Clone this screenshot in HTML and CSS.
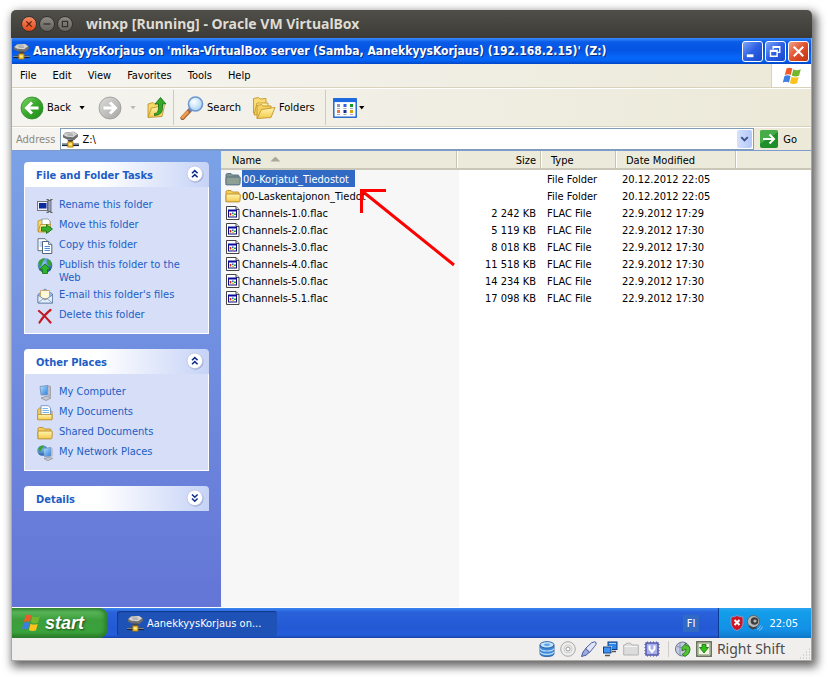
FILE: index.html
```html
<!DOCTYPE html>
<html lang="en">
<head>
<meta charset="utf-8">
<title>winxp [Running] - Oracle VM VirtualBox</title>
<link rel="stylesheet" href="styles.css">
</head>
<body>
<svg class="defs" aria-hidden="true">
  <defs>
    <linearGradient id="gGreen" x1="0" y1="0" x2="1" y2="1"><stop offset="0" stop-color="#7fd86a"/><stop offset=".5" stop-color="#3aa62c"/><stop offset="1" stop-color="#1f8a1c"/></linearGradient>
    <linearGradient id="gGrey" x1="0" y1="0" x2="1" y2="1"><stop offset="0" stop-color="#dcdcda"/><stop offset="1" stop-color="#a5a5a3"/></linearGradient>
    <linearGradient id="gFolder" x1="0" y1="0" x2="0" y2="1"><stop offset="0" stop-color="#fff6b0"/><stop offset="1" stop-color="#f3c94c"/></linearGradient>
    <linearGradient id="gScreen" x1="0" y1="0" x2="1" y2="1"><stop offset="0" stop-color="#b9e6ff"/><stop offset="1" stop-color="#2e7fdc"/></linearGradient>
    <radialGradient id="gLens" cx=".4" cy=".35" r=".7"><stop offset="0" stop-color="#fff"/><stop offset="1" stop-color="#9fd0f4"/></radialGradient>
    <radialGradient id="gGlobe" cx=".35" cy=".3" r=".8"><stop offset="0" stop-color="#8fc8f4"/><stop offset="1" stop-color="#1a4f9e"/></radialGradient>
  </defs>
  <symbol id="netdrive" viewBox="0 0 16 16">
    <path d="M.8 4 3.500 1.200 11.500.7 15 3.200v2.300L11.500 8.500 5 8 1 6z" fill="#6e6e6e"/>
    <path d="M1.300 3.800 4 1.500 11.300 1 14.300 3 10.500 5.800 4.200 5.400z" fill="#d4d4d4"/>
    <path d="M4.500 2.800h5.500M5.500 4h5" stroke="#999" stroke-width=".8"/>
    <path d="M5 8.200h6L9.300 10.500H6.500z" fill="#444"/>
    <path d="M0 13h16" stroke="#1c2430" stroke-width="2.400"/><path d="M0 12.500h16" stroke="#9fb4c8" stroke-width=".8"/>
    <rect x="5.500" y="10.300" width="4.800" height="4.800" fill="#ffcf3a" stroke="#a87308" stroke-width=".8"/><path d="M6.700 11.700h2.300v1.500h-2.300z" fill="#fff2a8"/>
  </symbol>
  <symbol id="folder" viewBox="0 0 16 16">
    <path d="M1 12.500V4Q1 2.500 2.500 2.500H6L7.500 4H13Q14 4 14 5.500v2" fill="#f4cf5a" stroke="#b8892a" stroke-width=".9"/>
    <path d="M1 13.500V7Q1.300 6 2.500 6H14.200Q15.400 6 15.300 7L15 12.600Q14.900 13.900 14 13.900H1.800Q1 13.900 1 13z" fill="url(#gFolder)" stroke="#b8892a" stroke-width=".9"/>
  </symbol>
  <symbol id="folder-sel" viewBox="0 0 16 16">
    <path d="M1 12.500V4Q1 2.500 2.500 2.500H6L7.500 4H13Q14 4 14 5.500v2" fill="#7f9690" stroke="#506880" stroke-width=".9"/>
    <path d="M1 13.500V7Q1.300 6 2.500 6H14.200Q15.400 6 15.300 7L15 12.600Q14.900 13.900 14 13.900H1.800Q1 13.900 1 13z" fill="#8ea096" stroke="#506880" stroke-width=".9"/>
  </symbol>
  <symbol id="flac" viewBox="0 0 16 16">
    <path d="M1.500 1.500h9.500l3 3v10H1.500z" fill="#fff" stroke="#444"/><path d="M11 1.500v3h3" fill="#ddd" stroke="#444"/>
    <rect x="3.500" y="5.500" width="8" height="6.500" fill="#fff" stroke="#0a0a7a"/><path d="M3 5.500h9" stroke="#0a0a9a" stroke-width="2"/>
    <path d="M4.500 9h2M5.500 8v2.500" stroke="#d22" stroke-width="1.200"/><rect x="7" y="7.500" width="1.600" height="1.500" fill="#26c"/><rect x="9" y="8.500" width="2" height="1.500" fill="#2a2"/><rect x="7.300" y="9.700" width="1.500" height="1.300" fill="#d8a400"/>
  </symbol>
  <symbol id="flag" viewBox="0 0 20 18">
    <path d="M4.500 1.600Q7.500 0 10.300 1.600L8.800 8Q6 6.700 2.800 8z" fill="#f0592a"/>
    <path d="M11.300 2.300Q14.500 4 18.800 2.300L17 8.700Q13.300 10.200 9.800 8.500z" fill="#73b82c"/>
    <path d="M2.500 9Q5.500 7.700 8.500 9L7 15.400Q4 14 .8 15.400z" fill="#3c7fe0"/>
    <path d="M9.500 9.700Q13 11.300 16.700 9.900L15 16.200Q11 17.700 7.900 16z" fill="#fbc21c"/>
  </symbol>
  <symbol id="chev-up" viewBox="0 0 18 18">
    <circle cx="9.500" cy="9.700" r="8" fill="#8c98c4" opacity=".7"/><circle cx="8.800" cy="8.800" r="7.800" fill="#fff" stroke="#b9c3e0" stroke-width=".8"/>
    <path d="M6 8.300 8.800 5.600l2.800 2.700M6 12.300l2.800-2.700 2.800 2.700" fill="none" stroke="#0c2b86" stroke-width="1.500"/>
  </symbol>
  <symbol id="chev-down" viewBox="0 0 18 18">
    <circle cx="9.500" cy="9.700" r="8" fill="#8c98c4" opacity=".7"/><circle cx="8.800" cy="8.800" r="7.800" fill="#fff" stroke="#b9c3e0" stroke-width=".8"/>
    <path d="M6 5.500l2.800 2.700 2.800-2.700M6 9.500l2.800 2.700 2.800-2.700" fill="none" stroke="#0c2b86" stroke-width="1.500"/>
  </symbol>
</svg>

<main class="window">
  <header class="host-title">
    <button class="orb orb-close" aria-label="Close machine"><svg viewBox="0 0 16 16"><path d="M5 5l6 6M11 5l-6 6" stroke="#5c1c0a" stroke-width="1.500"/></svg></button>
    <button class="orb" aria-label="Minimize machine"><svg viewBox="0 0 16 16"><path d="M4 8h8" stroke="#33322e" stroke-width="1.500"/></svg></button>
    <button class="orb" aria-label="Maximize machine"><svg viewBox="0 0 16 16"><path d="M5 5h6v6H5z" fill="none" stroke="#33322e" stroke-width="1.400"/></svg></button>
    <h1>winxp [Running] - Oracle VM VirtualBox</h1>
  </header>

  <section class="guest">
    <header class="xp-title">
      <svg class="i18"><use href="#netdrive"/></svg>
      <h2>AanekkyysKorjaus on 'mika-VirtualBox server (Samba, AanekkyysKorjaus) (192.168.2.15)' (Z:)</h2>
      <div class="caption">
        <button aria-label="Minimize"><svg viewBox="0 0 20 20"><path d="M4 14.500h7" stroke="#fff" stroke-width="3"/></svg></button>
        <button aria-label="Restore"><svg viewBox="0 0 20 20"><path d="M7.500 8V5h7v6H12M7.500 5.500h7" fill="none" stroke="#fff" stroke-width="1.400"/><path d="M4.700 9h7v6h-7zM4.700 9.700h7" fill="none" stroke="#fff" stroke-width="1.500"/></svg></button>
        <button class="close" aria-label="Close"><svg viewBox="0 0 20 20"><path d="M5 5l10 10M15 5L5 15" stroke="#fff" stroke-width="2.200"/></svg></button>
      </div>
    </header>

    <nav class="menubar">
      <button>File</button><button>Edit</button><button>View</button><button>Favorites</button><button>Tools</button><button>Help</button>
      <span class="throbber"><svg viewBox="0 0 20 18"><use href="#flag"/></svg></span>
    </nav>

    <div class="toolbar">
      <button class="tool back"><svg class="i24" viewBox="0 0 24 24"><circle cx="12" cy="12" r="11" fill="url(#gGreen)" stroke="#2b8a24" stroke-width=".8"/><path d="M18.500 12H7M12 6.500 6.500 12l5.500 5.500" fill="none" stroke="#fff" stroke-width="3"/></svg>Back</button>
      <button class="drop" aria-label="Back history"></button>
      <button class="tool forward" aria-label="Forward"><svg class="i24" viewBox="0 0 24 24"><circle cx="12" cy="12" r="11" fill="url(#gGrey)" stroke="#999" stroke-width=".8"/><path d="M5.500 12H17M12 6.500l5.500 5.500-5.500 5.500" fill="none" stroke="#fff" stroke-width="3"/></svg></button>
      <button class="drop off" aria-label="Forward history"></button>
      <button class="tool up" aria-label="Up"><svg class="i24" viewBox="0 0 24 24"><path d="M3 21V8l5-1.500L9.500 8 14 7v5z" fill="#f6d868" stroke="#b98d22" stroke-width=".8"/><path d="M3 21.500 6.500 12l13-2.500L17 20.500z" fill="url(#gFolder)" stroke="#b98d22" stroke-width=".8"/><path d="M9.500 17.500q4 0 4-5.500V8H10l5.500-6.500L21 8h-3.500v4q0 7-8 7.500z" fill="#35a82a" stroke="#14700f" stroke-width=".8"/></svg></button>
      <span class="rule"></span>
      <button class="tool search"><svg class="i24" viewBox="0 0 24 24"><path d="M2.500 22 10.500 13.500" stroke="#9a5b2a" stroke-width="4.200" stroke-linecap="round"/><path d="M2.500 21.500 7.500 16.200" stroke="#f19a4a" stroke-width="2.800" stroke-linecap="round"/><path d="M9 14.800l2-2" stroke="#777fae" stroke-width="3.500"/><circle cx="15.500" cy="8" r="7" fill="url(#gLens)" stroke="#6f96cf" stroke-width="1.600"/></svg>Search</button>
      <button class="tool folders"><svg class="i24" viewBox="0 0 24 24"><path d="M1.500 17V2.500l5-1L8 3l6-.5V15z" fill="#f9dc74" stroke="#c39528" stroke-width=".9"/><path d="M2 19 5 7h11v11z" fill="url(#gFolder)" stroke="#c39528" stroke-width=".9"/><path d="M5 22.500V9.500l4.500-1L11 10h8v5z" fill="#f6d060" stroke="#c39528" stroke-width=".9"/><path d="M5 22.500 9.500 13.500l13.500-2-4 10z" fill="url(#gFolder)" stroke="#c39528" stroke-width=".9"/></svg>Folders</button>
      <span class="rule"></span>
      <button class="tool views" aria-label="Views"><svg class="i24" viewBox="0 0 24 20"><rect x=".8" y=".8" width="22.400" height="18.400" fill="#fff" stroke="#1560cc" stroke-width="1.400"/><path d="M.5 2.300h23" stroke="#1d6ae0" stroke-width="3.600"/><path d="M4 6h3v3H4z" fill="#8f93b8"/><path d="M10.500 6h3v3h-3z" fill="#2c66d8"/><path d="M17 6h3v3h-3z" fill="#149a28"/><path d="M4 12h3v3H4z" fill="#ef6f4c"/><path d="M10.500 12h3v3h-3z" fill="#17308c"/><path d="M17 12h3v3h-3z" fill="#d1a50a"/><path d="M4 10.500h3M10.500 10.500h3M17 10.500h3M4 16.500h3M10.500 16.500h3M17 16.500h3" stroke="#aab"/></svg></button>
      <button class="drop" aria-label="View options"></button>
    </div>

    <form class="address">
      <label for="addr">Address</label>
      <div class="combo">
        <svg class="i18"><use href="#netdrive"/></svg>
        <input id="addr" type="text" value="Z:\">
        <button type="button" aria-label="Show addresses"><svg viewBox="0 0 16 18"><path d="M4.500 7 8 10.500 11.500 7" fill="none" stroke="#3c5488" stroke-width="2.200"/></svg></button>
      </div>
      <button type="button" class="go"><svg viewBox="0 0 18 18"><rect width="18" height="18" rx="2" fill="#1f8f2b"/><path d="M0 2a2 2 0 0 1 2-2h14a2 2 0 0 1 2 2L0 14z" fill="#5fbf5c" opacity=".6"/><path d="M3 9h11M9.500 4.500 14 9l-4.500 4.500" fill="none" stroke="#fff" stroke-width="2"/></svg>Go</button>
    </form>

    <div class="explorer">
      <aside class="tasks">
        <section class="panel">
          <h3>File and Folder Tasks <button aria-label="Collapse"><svg><use href="#chev-up"/></svg></button></h3>
          <ul>
            <li><svg viewBox="0 0 16 16"><rect x=".5" y="3.500" width="10" height="9" fill="#eef" stroke="#777"/><rect x="2" y="5" width="7.500" height="5.500" fill="#0b2a9c"/><path d="M9.500 1.500q3 0 3 1 0-1 3-1M9.500 14.500q3 0 3-1 0 1 3 1" fill="none" stroke="#555"/><rect x="11" y="2.500" width="3" height="11" fill="#9aa8cc" stroke="#555" stroke-width=".8"/></svg><a href="#">Rename this folder</a></li>
            <li><svg viewBox="0 0 16 16"><path d="M1 13V3l4-1.500L6 3h7v9z" fill="#f7da74" stroke="#b48a26" stroke-width=".8"/><path d="M5 1h6l2 2v7H5z" fill="#fff" stroke="#789" stroke-width=".7"/><path d="M1 14 3.500 6.500h10L12 14z" fill="url(#gFolder)" stroke="#b48a26" stroke-width=".8"/><path d="M4.500 9h5V6.500L15.500 11l-6 4.500V13h-5z" fill="#3aae2e" stroke="#136b10" stroke-width=".8"/></svg><a href="#">Move this folder</a></li>
            <li><svg viewBox="0 0 16 16"><path d="M1 .7h7l2 2v10H1z" fill="#fff" stroke="#567" stroke-width=".9"/><path d="M2.500 4h5M2.500 6h5M2.500 8h5" stroke="#7fb0e8"/><path d="M5.500 3.500h6l3.300 3V15.500H5.500z" fill="#fff" stroke="#456" stroke-width=".9"/><path d="M11.500 3.500v3h3" fill="#cde" stroke="#456" stroke-width=".7"/><path d="M7.500 8.500h5.500M7.500 10.500h5.500M7.500 12.500h5.500" stroke="#4a90e0"/></svg><a href="#">Copy this folder</a></li>
            <li><svg viewBox="0 0 16 16"><circle cx="8" cy="7.500" r="7.300" fill="url(#gGlobe)"/><path d="M1.500 4Q4.500-.3 8 .5L6 4 4.500 7 2 10zM10 .8q4.500 1.500 5 6.700L12 8l-2-3z" fill="#35a336"/><path d="M8 6l5.500 5.500h-3V15.500h-5v-4h-3z" fill="#2fb32a" stroke="#14700f" stroke-width=".8"/></svg><a href="#">Publish this folder to the Web</a></li>
            <li><svg viewBox="0 0 16 16"><path d="M1 6.500 8 1l7.500 5V15H1z" fill="#9db8dc" stroke="#5e7da8" stroke-width=".8"/><path d="M3.500 2.500h9v8h-9z" fill="#fff8d8" stroke="#c49a4a" stroke-width=".7"/><path d="M1 7l7 5 7.500-5v8H1z" fill="#e6f0fb" stroke="#5e7da8" stroke-width=".8"/><path d="M1 15l5.500-4.500M15.500 15 10 10.500" stroke="#5e7da8" stroke-width=".7"/></svg><a href="#">E-mail this folder's files</a></li>
            <li><svg viewBox="0 0 16 16"><path d="M2 3q5 4 11.500 11.500M13.500 2Q8 6 2.500 14.500" fill="none" stroke="#c41a24" stroke-width="2.200" stroke-linecap="round"/></svg><a href="#">Delete this folder</a></li>
          </ul>
        </section>
        <section class="panel">
          <h3>Other Places <button aria-label="Collapse"><svg><use href="#chev-up"/></svg></button></h3>
          <ul>
            <li><svg viewBox="0 0 16 16"><path d="M3 1.500 10.500.5v9.300L4 10z" fill="url(#gScreen)" stroke="#6f8cb8" stroke-width=".8"/><path d="M10.500.5l3 1v10l-3-2z" fill="#b8bccb" stroke="#888" stroke-width=".6"/><path d="M4 13l6-2 4 2-5 2.500z" fill="#c4c8d4" stroke="#888" stroke-width=".7"/></svg><a href="#">My Computer</a></li>
            <li><svg viewBox="0 0 16 16"><path d="M.7 14V4.500L2.500 3H6v3h9v8z" fill="#f3cc58" stroke="#b8892a" stroke-width=".8"/><path d="M4 .7h7.500L13.500 3v9H4z" fill="#fff" stroke="#5b86c4" stroke-width=".8"/><path d="M5.500 3.500h5.500M5.500 5.500h6.500M5.500 7.500h6.500" stroke="#79b2ec"/><path d="M.7 14.800V9.500H15v5.300z" fill="url(#gFolder)" stroke="#b8892a" stroke-width=".8"/></svg><a href="#">My Documents</a></li>
            <li><svg><use href="#folder"/></svg><a href="#">Shared Documents</a></li>
            <li><svg viewBox="0 0 16 16"><circle cx="5.500" cy="5.500" r="5.200" fill="url(#gGlobe)"/><path d="M1 4Q2.500 0 7 .8L5 4 3 7z" fill="#35a336"/><path d="M6 3.500 14 2.500V11L7.500 11.500z" fill="url(#gScreen)" stroke="#7c95bb" stroke-width=".8"/><path d="M14 2.500l1.800 1V12L14 11z" fill="#b8bccb"/><path d="M7 13.500l6-1.500 2.500 1.500-5 2.200z" fill="#c4c8d4" stroke="#888" stroke-width=".7"/></svg><a href="#">My Network Places</a></li>
          </ul>
        </section>
        <section class="panel">
          <h3>Details <button aria-label="Expand"><svg><use href="#chev-down"/></svg></button></h3>
        </section>
      </aside>

      <div class="list">
        <table>
          <colgroup><col class="c-name"><col class="c-size"><col class="c-type"><col class="c-date"><col></colgroup>
          <thead><tr><th>Name <span class="sort"></span></th><th class="num">Size</th><th>Type</th><th>Date Modified</th><th class="rest"></th></tr></thead>
          <tbody>
            <tr class="selected"><td><svg><use href="#folder-sel"/></svg><span>00-Korjatut_Tiedostot</span></td><td></td><td>File Folder</td><td>20.12.2012 22:05</td><td></td></tr>
            <tr><td><svg><use href="#folder"/></svg><span>00-Laskentajonon_Tiedot</span></td><td></td><td>File Folder</td><td>20.12.2012 22:05</td><td></td></tr>
            <tr><td><svg><use href="#flac"/></svg><span>Channels-1.0.flac</span></td><td>2 242 KB</td><td>FLAC File</td><td>22.9.2012 17:29</td><td></td></tr>
            <tr><td><svg><use href="#flac"/></svg><span>Channels-2.0.flac</span></td><td>5 119 KB</td><td>FLAC File</td><td>22.9.2012 17:30</td><td></td></tr>
            <tr><td><svg><use href="#flac"/></svg><span>Channels-3.0.flac</span></td><td>8 018 KB</td><td>FLAC File</td><td>22.9.2012 17:30</td><td></td></tr>
            <tr><td><svg><use href="#flac"/></svg><span>Channels-4.0.flac</span></td><td>11 518 KB</td><td>FLAC File</td><td>22.9.2012 17:30</td><td></td></tr>
            <tr><td><svg><use href="#flac"/></svg><span>Channels-5.0.flac</span></td><td>14 234 KB</td><td>FLAC File</td><td>22.9.2012 17:30</td><td></td></tr>
            <tr><td><svg><use href="#flac"/></svg><span>Channels-5.1.flac</span></td><td>17 098 KB</td><td>FLAC File</td><td>22.9.2012 17:30</td><td></td></tr>
          </tbody>
        </table>
        <svg class="pointer" viewBox="0 0 98 80" aria-hidden="true"><path d="M27 2.500H2.500V25M2.500 2.500 95 77" fill="none" stroke="#f00" stroke-width="3"/></svg>
      </div>
    </div>

    <footer class="taskbar">
      <button class="start"><svg viewBox="0 0 20 18"><use href="#flag"/></svg>start</button>
      <button class="task"><svg class="i18"><use href="#netdrive"/></svg>AanekkyysKorjaus on...</button>
      <span class="lang">FI</span>
      <div class="tray">
        <svg viewBox="0 0 16 16"><path d="M2 2q4 0 6-1.500Q10 2 14 2v6q0 5-6 7.700Q2 13 2 8z" fill="#cf1524" stroke="#8aa0c8" stroke-width=".9"/><path d="M5.500 5l5 5M10.500 5l-5 5" stroke="#fff" stroke-width="2"/></svg>
        <svg viewBox="0 0 16 16"><ellipse cx="6.500" cy="6.500" rx="6" ry="6" fill="#b9b9b9" stroke="#555" stroke-width=".8"/><circle cx="7.500" cy="6" r="3.800" fill="#3c3c3c"/><circle cx="8" cy="6" r="1.600" fill="#bbb"/><path d="M2 11l3.500 2.500 4-1" fill="none" stroke="#444" stroke-width="2"/><path d="M10 14.500q3-1 3.500-4M12 15.500q3-1 3.500-4" fill="none" stroke="#9cc0ff" stroke-width=".9"/></svg>
        <time>22:05</time>
      </div>
    </footer>
  </section>

  <footer class="host-status">
    <svg viewBox="0 0 16 16"><path d="M1 4v8.500Q1 15.500 8 15.500t7-3V4z" fill="#3f8ad6" stroke="#1c4f94" stroke-width=".8"/><path d="M1.300 7.500q0 2.500 6.700 2.500t6.700-2.500M1.300 10.800q0 2.500 6.700 2.500t6.700-2.500" fill="none" stroke="#bfe0ff" stroke-width="1.200"/><ellipse cx="8" cy="3.800" rx="7" ry="3.200" fill="#bfe3ff" stroke="#1c4f94" stroke-width=".8"/><ellipse cx="8" cy="3.800" rx="3" ry="1.200" fill="#5fa4e6"/></svg>
    <svg viewBox="0 0 16 16"><circle cx="8" cy="8" r="7.300" fill="#ededed" stroke="#a9a9a9"/><circle cx="8" cy="8" r="4" fill="none" stroke="#cfcfcf"/><circle cx="8" cy="8" r="2" fill="#fff" stroke="#999"/></svg>
    <svg viewBox="0 0 16 16"><path d="M4.500 7.500 10.500 1.800Q14 0 15 1.500T13.500 5.500L8.500 11.500z" fill="#dfe5f8" stroke="#3f4d94" stroke-width=".9"/><path d="M4.800 7.500l3.700 3.700-3.500 3-4.500 1.300L2 11z" fill="#9aabe0" stroke="#3f4d94" stroke-width=".9"/></svg>
    <svg viewBox="0 0 16 16"><rect x="6" y="1" width="9" height="7.500" fill="#2f86ea" stroke="#123f80"/><path d="M7 2.500h7" stroke="#a8d4ff"/><path d="M10 10.500h4" stroke="#555" stroke-width="1.500"/><rect x="1" y="5.500" width="8.500" height="7" fill="#53a4f6" stroke="#fff"/><rect x="1.500" y="6" width="7.500" height="6" fill="#3f94f0" stroke="#123f80"/><path d="M3 14.500h5" stroke="#555" stroke-width="1.500"/></svg>
    <svg viewBox="0 0 16 16"><path d="M.7 14V4h1.500l1.300-1.800h4L9 4h6.300v10z" fill="#dcdcdc" stroke="#b3b3b3"/><path d="M1.500 5.500h13" stroke="#f6f6f6"/></svg>
    <svg viewBox="0 0 16 16"><rect x="2" y="2" width="12" height="12" fill="#a9b0ea" stroke="#4a52a8" stroke-width="1.400"/><path d="M3.500.5v1M6.500.5v1M9.500.5v1M12.500.5v1M3.500 14.500v1M6.500 14.500v1M9.500 14.500v1M12.500 14.500v1M.5 3.500h1M.5 6.500h1M.5 9.500h1M.5 12.500h1M14.500 3.500h1M14.500 6.500h1M14.500 9.500h1M14.500 12.500h1" stroke="#4a52a8"/><path d="M5.500 4.500V8L8 11l2.500-3V4.500" fill="none" stroke="#fff" stroke-width="2"/></svg>
    <span class="split"></span>
    <svg viewBox="0 0 16 16"><circle cx="7.500" cy="8" r="7" fill="#c3cbe0" stroke="#6c7692"/><path d="M5 2v12M2 5.500q5 2 10 0" fill="none" stroke="#8792b4"/><path d="M7 10V6.500l4-4.500v2.500q4.500 0 4 4.500-.5 4.500-5 6.500l-3-2q3.500-1.500 4-4.500L11 8z" fill="#55c236" stroke="#1f6d12" stroke-width=".8"/></svg>
    <svg viewBox="0 0 16 16"><rect x=".8" y=".8" width="14.400" height="14.400" fill="#dfe8c8" stroke="#5a6350" stroke-width="1.400"/><rect x="2.500" y="2.500" width="11" height="11" fill="#f2f7e4" stroke="#a9b496" stroke-width=".8"/><path d="M6 3.500h4v3h2.500L8 12 3.500 6.500H6z" fill="#2fc018" stroke="#156d0b" stroke-width=".8"/></svg>
    <span class="hostkey">Right Shift</span>
    <svg class="grip" viewBox="0 0 12 12"><path d="M11 1h1M8 4h1M11 4h1M5 7h1M8 7h1M11 7h1M2 10h1M5 10h1M8 10h1M11 10h1" stroke="#b8b6b2" stroke-width="1"/></svg>
  </footer>
</main>
</body>
</html>
```
FILE: styles.css
```css
* { box-sizing: border-box; }

body {
  margin: 0;
  padding: 10px 16px 16px 11px;
  min-height: 100vh;
  display: flex;
  background: #fff;
  color: #000;
  font: 11px/13px "DejaVu Sans Condensed", Tahoma, sans-serif;
}

h1, h2, h3, ul { margin: 0; padding: 0; font-size: inherit; list-style: none; }
button, input { margin: 0; padding: 0; border: 0; background: none; color: inherit; font: inherit; }
button { display: flex; align-items: center; white-space: nowrap; }
svg { display: block; flex: none; }
.defs { position: absolute; width: 0; height: 0; }
.i18 { width: 17px; height: 17px; }
.i24 { width: 24px; height: 24px; }

.window {
  flex: 1;
  min-width: 0;
  display: flex;
  flex-direction: column;
  background: #f1efed;
  border-radius: 5px 5px 0 0;
  box-shadow: 3px 4px 10px 2px rgba(0, 0, 0, .6);
}

.host-title {
  height: 28px;
  padding-left: 10px;
  display: flex;
  align-items: center;
  gap: 2px;
  border-radius: 5px 5px 0 0;
  background: linear-gradient(#504f49, #3c3b37);
  color: #dfdbd2;
}
.host-title h1 { margin-left: 11px; font: bold 14px/20px "Noto Sans", sans-serif; white-space: nowrap; }
.orb { width: 16px; height: 16px; border-radius: 50%; background: linear-gradient(#8b8982, #66645e); border: 1px solid #33322e; }
.orb-close { background: linear-gradient(#f58a65, #e2481a); }
.orb svg { width: 14px; height: 14px; }

.guest { flex: 1; display: flex; flex-direction: column; border: solid #aaa8a4; border-width: 0 1px; }

.xp-title {
  height: 26px;
  padding: 0 2px 0 1px;
  display: flex;
  align-items: center;
  gap: 3px;
  background: linear-gradient(#3a8cff 0, #0a5be6 4px, #0554e4 12px, #0568fb 20px, #0460f0 23px, #0344c4 26px);
  color: #fff;
}
.xp-title h2 { flex: 1; font: bold 12px/16px "DejaVu Sans Condensed", sans-serif; white-space: nowrap; text-shadow: 1px 1px #0a2c7c; }
.caption { display: flex; gap: 2px; }
.caption button { width: 21px; height: 21px; border: 1px solid #fff; border-radius: 3px; background: linear-gradient(135deg, #7ea4f8, #2c5fe4 50%, #1a48c8); }
.caption .close { background: linear-gradient(135deg, #f0a088, #e0502c 50%, #c03410); }
.caption svg { width: 19px; height: 19px; }

.menubar { height: 24px; padding-left: 8px; display: flex; align-items: stretch; gap: 16px; background: linear-gradient(90deg, #f6f5f2, #ece9d8); border-bottom: 1px solid #d8d2bd; }
.throbber { width: 40px; margin-left: auto; display: grid; place-items: center; background: #fff; border-left: 1px solid #d8d2bd; }
.throbber svg { width: 20px; height: 18px; }

.toolbar { height: 39px; padding-left: 8px; display: flex; align-items: center; background: linear-gradient(90deg, #f5f4f0, #ece9d8); border-top: 1px solid #fff; border-bottom: 1px solid #d8d2bd; }
.tool { gap: 3px; }
.drop { width: 6px; height: 4px; background: #000; clip-path: polygon(0 0, 100% 0, 50% 100%); margin-left: 8px; }
.drop.off { background: #bbb; }
.forward { margin-left: 13px; }
.up { margin-left: 9px; }
.rule { align-self: stretch; width: 1px; margin: 1px 6px 1px 4px; background: #d0ccb8; }
.folders { margin-left: 11px; }
.folders + .rule { margin: 1px 7px 1px 10px; }
.views + .drop { margin-left: 2px; }

.address { height: 23px; padding: 0 14px 0 4px; display: flex; align-items: center; background: linear-gradient(90deg, #f5f4f0, #ece9d8); border-top: 1px solid #fff; }
.address label { margin-right: 5px; color: #8a897f; }
.combo { flex: 1; height: 22px; padding: 0 1px; display: flex; align-items: center; gap: 3px; background: #fff; border: 1px solid #7f9db9; }
.combo input { flex: 1; min-width: 0; outline: 0; }
.combo button svg { width: 15px; height: 18px; border-radius: 2px; background: linear-gradient(90deg, #d4e0fc, #b2c7f8); }
.go { margin-left: 6px; gap: 5px; }
.go svg { width: 18px; height: 18px; }

.explorer { flex: 1; display: flex; border-top: 1px solid #7d9bd0; border-bottom: 1px solid #fff; }
.tasks { width: 209px; padding: 11px 12px; display: flex; flex-direction: column; gap: 15px; background: linear-gradient(#7ba2e7, #6375d6); }
.panel h3 { height: 25px; padding: 2px 5px 0 12px; display: flex; align-items: center; justify-content: space-between; border-radius: 4px 4px 0 0; background: linear-gradient(90deg, #fff 40%, #c6d3f7); color: #215dc6; font: bold 11px/13px "DejaVu Sans Condensed", sans-serif; }
.panel h3 button { margin-top: -4px; }
.panel h3 svg { width: 18px; height: 18px; }
.panel ul { padding: 11px 12px 9px; display: grid; gap: 4px; background: #d6dff7; border: solid #fff; border-width: 0 1px 1px; }
.panel li { display: flex; gap: 6px; }
.panel li svg { width: 16px; height: 16px; }
.panel a { color: #215dc6; text-decoration: none; }

.list { flex: 1; position: relative; background: linear-gradient(90deg, #f7f7f7 238px, #fff 238px); }
table { width: 100%; table-layout: fixed; border-collapse: separate; border-spacing: 0; }
.c-name { width: 237px; }
.c-size { width: 84px; }
.c-type { width: 75px; }
.c-date { width: 120px; }
th { height: 19px; padding: 1px 6px 0 9px; text-align: left; font-weight: normal; background: #ebeadb; border-bottom: 2px solid #cbc7b8; box-shadow: inset -1px 0 #fff, inset -2px 0 #c7c5b2; white-space: nowrap; }
th:first-child { padding-left: 11px; }
th.rest { box-shadow: none; }
th.num { text-align: right; }
.sort { display: inline-block; width: 10px; height: 5px; margin: 0 0 2px 6px; background: #aca899; clip-path: polygon(50% 0, 100% 100%, 0 100%); }
td { height: 17px; padding: 2px 6px 0 5px; white-space: nowrap; }
td:first-child { padding: 0 0 0 4px; display: flex; align-items: center; gap: 1px; }
td:first-child svg { width: 16px; height: 16px; }
td span { height: 17px; padding: 3px 0 1px; }
td:nth-child(2) { text-align: right; }
.selected span { padding: 3px 6px 1px 1px; background: #316ac5; color: #fff; }
.pointer { position: absolute; left: 138px; top: 37px; width: 98px; height: 80px; }

.taskbar { height: 30px; display: flex; align-items: center; background: linear-gradient(#3a86f0 0, #2a62dc 4px, #2458d4 20px, #245edb 27px, #1941a5 30px); color: #fff; }
.start { width: 96px; height: 30px; padding-left: 9px; gap: 4px; border-radius: 0 9px 9px 0; background: linear-gradient(#3a8c3a 0, #58b458 4px, #3c9e3c 12px, #3aa23a 24px, #2a7a2a 30px); box-shadow: inset -3px 0 4px #2a7a2a; font: italic bold 18px/22px "Liberation Sans", sans-serif; text-shadow: 1px 1px 2px #1c4a1c; }
.start svg { width: 20px; height: 18px; }
.task { width: 160px; height: 25px; margin-left: 9px; padding-left: 10px; gap: 3px; border-radius: 3px; background: #1e52b7; box-shadow: inset 1px 1px 1px #123a88; }
.lang { margin-left: auto; padding: 2px 4px; background: #316ac5; }
.tray { height: 30px; margin-left: 19px; padding: 0 13px 0 10px; display: flex; align-items: center; gap: 2px; background: linear-gradient(#2aa4f0 0, #139ee9 4px, #1290e6 22px, #0f76c8 30px); border-left: 1px solid #0a3c92; }
.tray svg { width: 16px; height: 16px; }
.tray time { margin-left: 4px; }

.host-status { height: 23px; padding-right: 1px; display: flex; align-items: center; justify-content: flex-end; gap: 5px; border: solid #aaa8a4; border-width: 0 1px 1px; color: #4c4c4c; font: 14px/20px "Noto Sans", sans-serif; }
.host-status svg { width: 16px; height: 16px; }
.split { width: 1px; height: 16px; margin: 0 1px 0 3px; background: #cfccc8; }
.host-status .grip { width: 12px; height: 12px; margin-left: 8px; align-self: flex-end; }
```
